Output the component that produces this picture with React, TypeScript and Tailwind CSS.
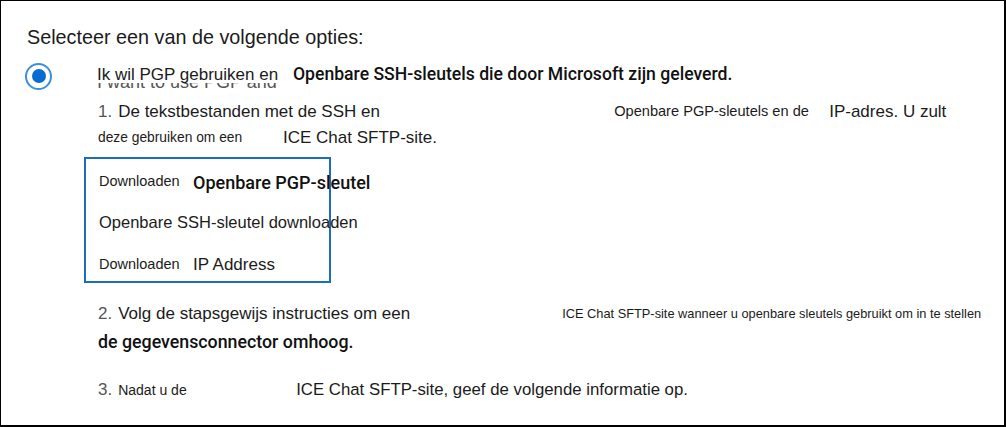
const font = "font-['Liberation_Sans',Arial,sans-serif]";
const semi = "font-['Roboto',Arial,sans-serif] font-medium text-[#111]";

function Radio() {
  return (
    <span className="flex h-[27px] w-[27px] shrink-0 items-center justify-center rounded-full border-2 border-[#3d8fdc] bg-white">
      <span className="h-[14px] w-[14px] rounded-full bg-[#0b6ccf]" />
    </span>
  );
}

export default function App() {
  return (
    <div
      className={`${font} h-[427px] w-[1006px] overflow-hidden border-l border-t border-r-2 border-b-2 border-black bg-white text-[#1b1b1b]`}
    >
      <div className="mt-[23px] flex h-[28px] items-center pl-[26px] text-[19.8px]">
        Selecteer een van de volgende opties:
      </div>

      <div className="mt-[10px] flex h-[28px] items-center whitespace-nowrap pl-[24px]">
        <Radio />
        <div className="relative ml-[45px] flex h-[28px] items-start">
          <span className="absolute left-0 top-[12px] text-[18px] leading-[17px] text-[#555]">
            I want to use PGP and
          </span>
          <span className="relative z-10 mt-[4px] w-[196px] shrink-0 bg-white text-[17px] leading-[17px]">
            Ik wil PGP gebruiken en
          </span>
          <span className={`${semi} relative z-10 h-[28px] shrink-0 bg-white pr-[200px] pt-[4px] text-[17.6px] leading-[17px]`}>
            Openbare SSH-sleutels die door Microsoft zijn geleverd.
          </span>
        </div>
      </div>

      <div className="whitespace-nowrap pl-[97px]">
        <div className="mt-[10px] flex h-[24px] items-center text-[17px]">
          <span className="text-[#555]">1.</span>
          <span className="ml-[6px] w-[496px] shrink-0">De tekstbestanden met de SSH en</span>
          <span className="w-[215px] shrink-0 text-[14.6px]">Openbare PGP-sleutels en de</span>
          <span>IP-adres. U zult</span>
        </div>
        <div className="mt-[2px] flex h-[24px] items-center">
          <span className="w-[185px] shrink-0 text-[13.8px]">deze gebruiken om een</span>
          <span className="text-[17px]">ICE Chat SFTP-site.</span>
        </div>
      </div>

      <div className="ml-[83px] mt-[7px] flex h-[126px] w-[247px] flex-col whitespace-nowrap border-2 border-[#1a6ec0] pl-[13px]">
        <div className="mt-[11px] flex h-[24px] items-center">
          <span className="w-[94px] shrink-0 text-[14.5px]">Downloaden</span>
          <span className={`${semi} text-[18px]`}>Openbare PGP-sleutel</span>
        </div>
        <div className="mt-[16px] flex h-[24px] items-center text-[16.5px]">
          Openbare SSH-sleutel downloaden
        </div>
        <div className="mt-[19px] flex h-[24px] items-center">
          <span className="w-[94px] shrink-0 text-[14.5px]">Downloaden</span>
          <span className="text-[17px]">IP Address</span>
        </div>
      </div>

      <div className="whitespace-nowrap pl-[97px]">
        <div className="mt-[19px] flex h-[24px] items-center">
          <span className="text-[17px] text-[#555]">2.</span>
          <span className="ml-[6px] w-[444px] shrink-0 text-[17px]">Volg de stapsgewijs instructies om een</span>
          <span className="text-[12.8px]">
            ICE Chat SFTP-site wanneer u openbare sleutels gebruikt om in te stellen
          </span>
        </div>
        <div className={`${semi} mt-[4px] flex h-[24px] items-center text-[17.8px]`}>
          de gegevensconnector omhoog.
        </div>
        <div className="mt-[24px] flex h-[24px] items-center">
          <span className="text-[17px] text-[#555]">3.</span>
          <span className="ml-[6px] w-[178px] shrink-0 text-[14px]">Nadat u de</span>
          <span className="text-[16.8px]">ICE Chat SFTP-site, geef de volgende informatie op.</span>
        </div>
      </div>
    </div>
  );
}
